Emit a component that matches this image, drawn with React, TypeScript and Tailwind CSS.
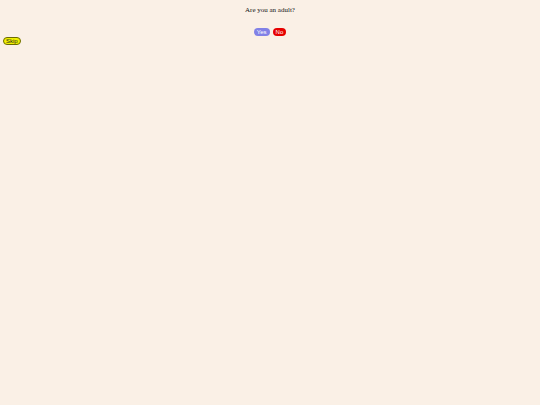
import React from 'react';

export default function App() {
  return (
    <div className="min-h-screen w-full bg-[#faf0e6]">
      <div className="flex flex-col items-center pt-[6px]">
        <h1 className="text-[7px] leading-[9px] text-[#111] font-['Liberation_Serif',serif]">
          Are you an adult?
        </h1>
        <div className="mt-[13px] flex gap-[3px]">
          <button className="h-[8px] px-[3px] rounded-full bg-[#8181e6] text-white text-[6px] leading-[8px] font-['Liberation_Sans',sans-serif]">
            Yes
          </button>
          <button className="h-[8px] px-[3px] rounded-full bg-[#e60000] text-white text-[6px] leading-[8px] font-['Liberation_Sans',sans-serif]">
            No
          </button>
        </div>
      </div>
      <div className="flex pl-[3px] pt-[1px]">
        <button className="h-[8px] px-[2px] rounded-full bg-[#f0f000] border border-[#6b6b00] text-[#222] text-[6px] leading-[6px] font-['Liberation_Sans',sans-serif]">
          Skip
        </button>
      </div>
    </div>
  );
}
